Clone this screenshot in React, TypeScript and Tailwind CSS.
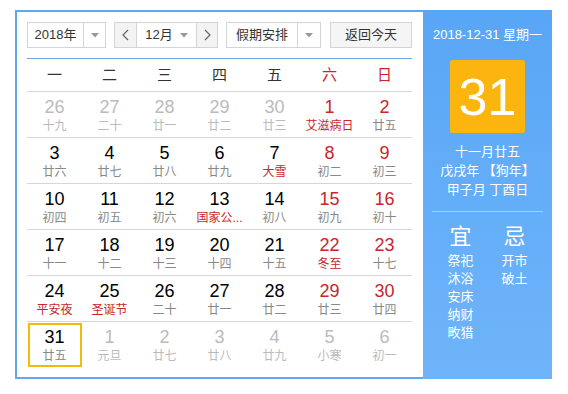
import React from 'react';

type Day = {
  n: number;
  lunar: string;
  other?: boolean; // belongs to another month
  red?: boolean; // red day number (weekend)
  fest?: boolean; // red lunar / festival text
  today?: boolean;
};

const WEEK = ['一', '二', '三', '四', '五', '六', '日'];

const ROWS: Day[][] = [
  [
    { n: 26, lunar: '十九', other: true },
    { n: 27, lunar: '二十', other: true },
    { n: 28, lunar: '廿一', other: true },
    { n: 29, lunar: '廿二', other: true },
    { n: 30, lunar: '廿三', other: true },
    { n: 1, lunar: '艾滋病日', red: true, fest: true },
    { n: 2, lunar: '廿五', red: true },
  ],
  [
    { n: 3, lunar: '廿六' },
    { n: 4, lunar: '廿七' },
    { n: 5, lunar: '廿八' },
    { n: 6, lunar: '廿九' },
    { n: 7, lunar: '大雪', fest: true },
    { n: 8, lunar: '初二', red: true },
    { n: 9, lunar: '初三', red: true },
  ],
  [
    { n: 10, lunar: '初四' },
    { n: 11, lunar: '初五' },
    { n: 12, lunar: '初六' },
    { n: 13, lunar: '国家公...', fest: true },
    { n: 14, lunar: '初八' },
    { n: 15, lunar: '初九', red: true },
    { n: 16, lunar: '初十', red: true },
  ],
  [
    { n: 17, lunar: '十一' },
    { n: 18, lunar: '十二' },
    { n: 19, lunar: '十三' },
    { n: 20, lunar: '十四' },
    { n: 21, lunar: '十五' },
    { n: 22, lunar: '冬至', red: true, fest: true },
    { n: 23, lunar: '十七', red: true },
  ],
  [
    { n: 24, lunar: '平安夜', fest: true },
    { n: 25, lunar: '圣诞节', fest: true },
    { n: 26, lunar: '二十' },
    { n: 27, lunar: '廿一' },
    { n: 28, lunar: '廿二' },
    { n: 29, lunar: '廿三', red: true },
    { n: 30, lunar: '廿四', red: true },
  ],
  [
    { n: 31, lunar: '廿五', today: true },
    { n: 1, lunar: '元旦', other: true },
    { n: 2, lunar: '廿七', other: true },
    { n: 3, lunar: '廿八', other: true },
    { n: 4, lunar: '廿九', other: true },
    { n: 5, lunar: '小寒', other: true },
    { n: 6, lunar: '初一', other: true },
  ],
];

function Caret() {
  return (
    <svg width="8" height="5" viewBox="0 0 8 5" className="block">
      <path d="M0 0 L8 0 L4 4.5 Z" fill="#999" />
    </svg>
  );
}

function Chevron({ dir }: { dir: 'left' | 'right' }) {
  return (
    <svg width="7" height="12" viewBox="0 0 7 12" className="block">
      <polyline
        points={dir === 'left' ? '6,1 1,6 6,11' : '1,1 6,6 1,11'}
        fill="none"
        stroke="#666"
        strokeWidth="1.2"
      />
    </svg>
  );
}

function Select({ label, width, textW }: { label: string; width: string; textW: string }) {
  return (
    <div className={`flex h-[26px] ${width} border border-[#d4d4d4] bg-white`}>
      <div className={`flex ${textW} items-center justify-center text-[13px] text-[#333]`}>{label}</div>
      <div className="flex flex-1 items-center justify-center border-l border-[#d4d4d4]">
        <Caret />
      </div>
    </div>
  );
}

function Cell({ d, col }: { d: Day; col: number }) {
  const numColor = d.other ? 'text-[#bbb]' : d.red || col >= 5 ? 'text-[#c8262c]' : 'text-black';
  const lunarColor = d.other ? 'text-[#bbb]' : d.fest ? 'text-[#c8262c]' : 'text-[#888]';
  return (
    <div className="flex items-center justify-center">
      <div
        className={`flex h-[44px] w-[54px] flex-col items-center justify-center pt-[2px] ${
          d.today ? 'border-2 border-[#f6b80b]' : ''
        }`}
      >
        <div className={`text-[18px] leading-[20px] ${numColor}`}>{d.n}</div>
        <div className={`mt-[1px] whitespace-nowrap text-[12px] leading-[17px] ${lunarColor}`}>{d.lunar}</div>
      </div>
    </div>
  );
}

export default function App() {
  return (
    <div className="h-[394px] w-[568px] bg-white pl-[15px] pt-[10px] font-['Liberation_Sans','Noto_Sans_CJK_SC',sans-serif]">
      <div className="flex h-[369px] w-[537px]">
        {/* left: calendar */}
        <div className="w-[408px] border-y-2 border-l-2 border-[#64a8ec] pl-[10px] pr-[11px] pt-[10px]">
          <div className="flex h-[26px] items-center">
            <Select label="2018年" width="w-[79px]" textW="w-[55px]" />
            <div className="ml-[8px] flex h-[26px] w-[104px] border border-[#d4d4d4] bg-white">
              <div className="flex w-[22px] items-center justify-center border-r border-[#d4d4d4] bg-[#f3f3f3]">
                <Chevron dir="left" />
              </div>
              <div className="flex flex-1 items-center justify-center gap-[7px] text-[13px] text-[#333]">
                12月
                <Caret />
              </div>
              <div className="flex w-[21px] items-center justify-center border-l border-[#d4d4d4] bg-[#f3f3f3]">
                <Chevron dir="right" />
              </div>
            </div>
            <div className="ml-[8px]">
              <Select label="假期安排" width="w-[95px]" textW="w-[70px]" />
            </div>
            <div className="ml-[9px] flex h-[26px] w-[82px] items-center justify-center border border-[#d4d4d4] bg-[#f5f5f5] text-[13px] text-[#333]">
              返回今天
            </div>
          </div>

          <div className="mt-[10px] border-t border-[#6aa9ea]" />
          <div className="grid h-[33px] grid-cols-7 items-center border-b border-[#d6d6d6]">
            {WEEK.map((w, i) => (
              <div key={w} className={`text-center text-[15px] ${i >= 5 ? 'text-[#c8262c]' : 'text-[#333]'}`}>
                {w}
              </div>
            ))}
          </div>

          {ROWS.map((row, ri) => (
            <div
              key={ri}
              className={`grid h-[46px] grid-cols-7 ${ri < ROWS.length - 1 ? 'border-b border-[#d6d6d6]' : ''}`}
            >
              {row.map((d, ci) => (
                <Cell key={ci} d={d} col={ci} />
              ))}
            </div>
          ))}
        </div>

        {/* right: today detail */}
        <div className="flex w-[129px] flex-col items-center bg-gradient-to-b from-[#59a6f6] to-[#6eb4fa] text-white">
          <div className="mt-[17px] text-[13px] leading-[16px]">2018-12-31 星期一</div>
          <div className="mt-[17px] flex h-[73px] w-[75px] items-center justify-center rounded-[2px] bg-[#fcb40f] text-[52px] leading-none">
            31
          </div>
          <div className="mt-[9px] text-[13px] leading-[19px]">十一月廿五</div>
          <div className="text-[13px] leading-[19px]">戊戌年 【狗年】</div>
          <div className="text-[13px] leading-[19px]">甲子月 丁酉日</div>
          <div className="mt-[12px] h-px w-[111px] bg-white/40" />
          <div className="mt-[12px] flex w-full justify-center gap-[28px]">
            <div className="flex w-[26px] flex-col items-center">
              <div className="text-[22px] leading-[26px]">宜</div>
              <div className="mt-[2px] text-[13px] leading-[18px]">
                <div>祭祀</div>
                <div>沐浴</div>
                <div>安床</div>
                <div>纳财</div>
                <div>畋猎</div>
              </div>
            </div>
            <div className="flex w-[26px] flex-col items-center">
              <div className="text-[22px] leading-[26px]">忌</div>
              <div className="mt-[2px] text-[13px] leading-[18px]">
                <div>开市</div>
                <div>破土</div>
              </div>
            </div>
          </div>
        </div>
      </div>
    </div>
  );
}
